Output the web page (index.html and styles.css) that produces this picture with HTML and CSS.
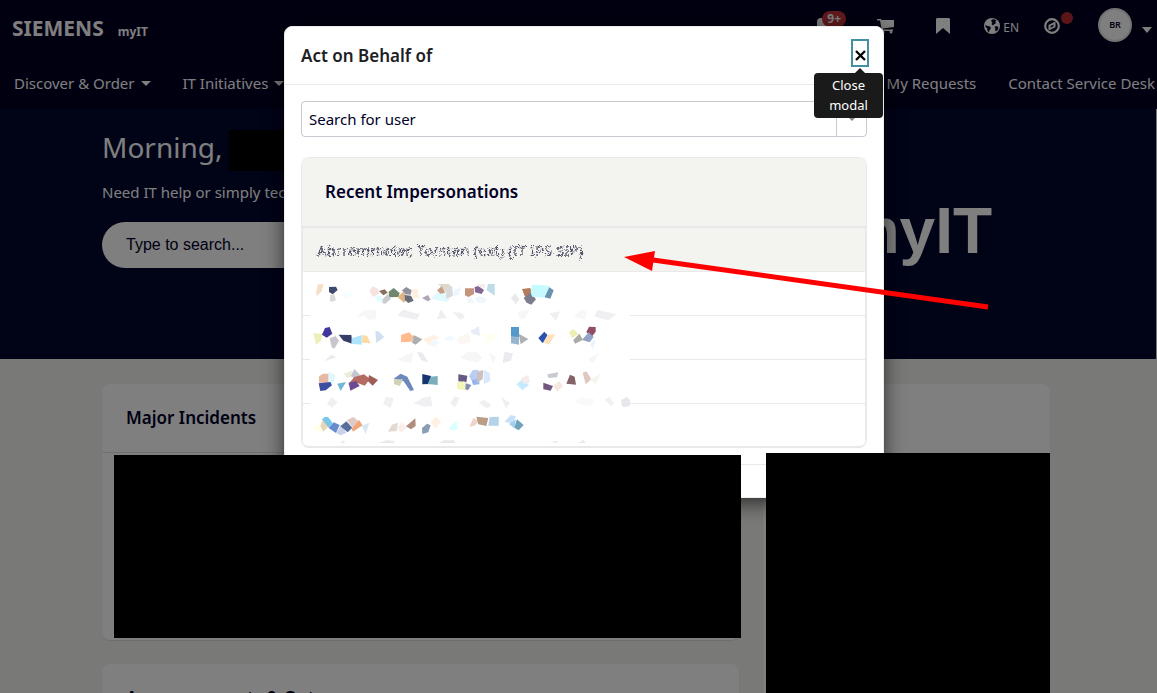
FILE: index.html
```html
<!DOCTYPE html>
<html lang="en">
<head>
<meta charset="utf-8">
<title>myIT</title>
<link rel="stylesheet" href="styles.css">
</head>
<body>
<header class="site-header">
  <div class="top-row">
    <a class="brand" href="#"><span class="brand-name">SIEMENS</span><span class="brand-product">myIT</span></a>
    <div class="tools">
      <button class="tool bell" aria-label="Notifications"><svg width="16" height="18" viewBox="0 0 16 18"><path fill="currentColor" d="M8 1a6 6 0 0 1 6 6v5l2 2H0V5a4 4 0 0 1 4-4zM6 15h4a2 2 0 0 1-4 0z"/></svg><span class="count">9+</span></button>
      <button class="tool cart" aria-label="Cart"><svg width="17" height="16" viewBox="0 0 17 16"><path fill="currentColor" d="M0 1h4l.5 1H17v7L6 10.500v1h10v1.500H5L3 2.500H0z"/><circle cx="6" cy="14" r="1.500" fill="currentColor"/><circle cx="14" cy="14" r="1.500" fill="currentColor"/></svg></button>
      <button class="tool bookmark" aria-label="Bookmarks"><svg width="14" height="16" viewBox="0 0 14 16"><path fill="currentColor" d="M1 0h12l1 1v15l-7-6-7 6V1z"/></svg></button>
      <button class="tool language"><svg width="16" height="16" viewBox="0 0 16 16"><circle cx="8" cy="8" r="8" fill="currentColor"/><path fill="#000028" d="M8 1.500l2.500-.3 2 1.300-1.500 1.500L12.500 5l-2 1L9 7.500 7.500 6 8.500 4.500 7 3zM1.300 7l2.200 1 2.500.5 1 1.500-1.500 2.200L5 14.300 3.500 13l-.3-2.500-1.700-1.500zM11 8.500l2-.5 1.500 1.500-.5 2-2 2-1-1.500.5-1.500-1-1z"/></svg><span>EN</span></button>
      <button class="tool compass" aria-label="Guided tour"><svg width="16" height="16" viewBox="0 0 16 16"><circle cx="8" cy="8" r="6.800" fill="none" stroke="currentColor" stroke-width="2.200"/><path fill="currentColor" fill-rule="evenodd" d="M11.500 3.500v5.500l-7 3.500V7zM9.500 6.500L6.500 8v1.800l3-1.500z"/></svg><span class="dot"></span></button>
      <button class="profile" aria-label="Profile"><span class="avatar">BR</span><span class="caret"></span></button>
    </div>
  </div>
  <nav class="main-nav">
    <a href="#">Discover &amp; Order<span class="caret"></span></a>
    <a href="#">IT Initiatives<span class="caret"></span></a>
    <a class="push" href="#">My Requests</a>
    <a href="#">Contact Service Desk</a>
  </nav>
</header>
<section class="hero">
  <div class="hero-copy">
    <h1>Morning,</h1>
    <p>Need IT help or simply tech advice?</p>
    <input class="hero-search" type="text" placeholder="Type to search..." aria-label="Type to search">
  </div>
  <div class="hero-logo">myIT</div>
</section>
<main class="content">
  <div class="column">
    <section class="card incidents"><h2>Major Incidents</h2></section>
    <section class="card"><h2>Announcements &amp; Outages</h2></section>
  </div>
  <aside class="card side"></aside>
</main>
<div class="backdrop">
  <div class="modal" role="dialog" aria-labelledby="modal-title">
    <div class="modal-head">
      <h2 id="modal-title">Act on Behalf of</h2>
      <button class="close" aria-label="Close modal"><svg width="11" height="11" viewBox="0 0 11 11"><path d="M1 1l9 9M10 1l-9 9" stroke="#000" stroke-width="2.300"/></svg></button>
      <div class="tooltip" role="tooltip">Close modal</div>
    </div>
    <div class="modal-body">
      <div class="combo">
        <input type="text" placeholder="Search for user" aria-label="Search for user">
        <button aria-label="Open list"><span class="small-caret"></span></button>
      </div>
      <section class="recent">
        <h3>Recent Impersonations</h3>
        <ul>
          <li class="active"><span class="scrambled">Abrremmelar, Torsten (ext) (IT IPS SIP)</span></li>
          <li></li><li></li><li></li><li></li>
        </ul>
      </section>
    </div>
    <div class="modal-foot"></div>
  </div>
</div>
<svg class="markup" width="1157" height="693" viewBox="0 0 1157 693" aria-hidden="true">
  <defs><filter id="scramble" x="-2%" y="-20%" width="104%" height="140%"><feTurbulence type="fractalNoise" baseFrequency="0.7" numOctaves="2" seed="4" result="n"/><feDisplacementMap in="SourceGraphic" in2="n" scale="6" xChannelSelector="R" yChannelSelector="G"/></filter></defs>
  <path fill="#fff" d="M310 282h320v162H310z"/>
  <g transform="translate(300 220) scale(.333333)">
    <path fill="#f6dfc8" d="M54 193l17-1-6 22-14 14-3-11z"/><path fill="#3e4970" d="M87 201l21-1 5 10-15 13-11-7z"/><path fill="#dadada" d="M91 224l12-1 5 18-13 5-6-5z"/><path fill="#f5fdff" d="M127 223l15-10 18 1-4 15-24 7z"/>
    <path fill="#f5e3df" d="M208 212l9-13 17 7 3 15-18 10z"/><path fill="#87705f" d="M237 213l17-5 9 10-13 8z"/><path fill="#71866e" d="M266 215l15-11 18 15-4 12-28 1z"/><path fill="#cbcbce" d="M245 241l18-19 10 14-17 15-10-2z"/><path fill="#e3fcff" d="M225 230l19-5 5 22-16-1z"/><path fill="#8f929e" d="M306 211l13-10 16 10-3 13-16-1z"/><path fill="#dfb681" d="M293 231l18-17 10 22-9 12z"/><path fill="#686c79" d="M314 225l19 2 8 15-16 7-10-8z"/><path fill="#ffefdf" d="M336 208l17-1 5 27-20 1z"/>
    <path fill="#b0a6b6" d="M366 234l18-9 8 14-9 5z"/><path fill="#e0faff" d="M392 237l20-21 26 4 11 17-9 9z"/><path fill="#e0d9cb" d="M414 192h34l8 20-18 4z"/><path fill="#c59f86" d="M411 211l14-12 11 19-15 3z"/><path fill="#d7dad8" d="M438 208l18-11 3 31-20 8z"/><path fill="#edf6ff" d="M461 213l25-14-10 26-15 4z"/><path fill="#c6937c" d="M495 205h27v17l-17 9-10-5z"/><path fill="#826594" d="M524 201l11-3 17 12-7 12-20-5z"/><path fill="#f4ecef" d="M528 192h28v12l-18-3z"/><path fill="#bddbe8" d="M564 192h20v35l-24-17z"/><path fill="#f0f7fc" d="M500 235l15-4 8 19-19-1zM525 233l15-5 22 9-11 14-21-4z"/>
    <path fill="#e8e9e9" d="M633 235l12-15 14 18-12 14z"/><path fill="#b57c5a" d="M666 207l24-3 8 14-23 13z"/><path fill="#7b7d8c" d="M671 234l20-16 17 20-14 16-14-6z"/><path fill="#c5faff" d="M696 195h26l28 4-11 34-43-3-4-15z"/><path fill="#6a94ae" d="M748 202l13 9-10 25-17-4z"/>
    <path fill="#f7f7f8" d="M166 291l27-22h34l3 27-23 5-11-12zM655 274l34-5-16 29-16-3zM822 290l21-22 18 7-7 23z"/><path fill="#efeff1" d="M293 288l15-19 52 14-10 16zM411 298l12-30 17 25zM458 276l29 3 8 14-15 6zM749 280l32-6-14 28zM883 288l10-18 56 13-24 18-25-6z"/>
  </g>
  <g transform="translate(300 320) scale(.333333)">
    <path fill="#eff0b9" d="M40 39l27 3-3 19-16 14z"/><path fill="#44379b" d="M66 44l9-20 14-3 8 20-17 12z"/><path fill="#c9c4cd" d="M89 55l18-7 10 14-14 24-8-4z"/><path fill="#363d66" d="M116 44l38 1 3 26-27-9z"/><path fill="#ade4fb" d="M155 55l30-10v29l-31-3z"/><path fill="#ffd9a3" d="M187 45l14 2 11 23-26-2z"/><path fill="#cfe0f2" d="M226 33l9 1 18 17-24 18z"/><path fill="#ffbb8d" d="M303 45l24-8 14 13-7 15-31 2z"/><path fill="#adaeb0" d="M341 45l26 13-20 16-11-6z"/><path fill="#fff2e3" d="M370 57l31-13 16 9-32 22z"/><path fill="#f1f9ff" d="M385 75l20-20 13 15-14 11zM433 56l17-10 19 12-24 6z"/><path fill="#fcf6f5" d="M469 55l36-17 8 28-33 8z"/><path fill="#e8ebf8" d="M510 33l27-14 3 28-23-5z"/><path fill="#fffff0" d="M553 40l38 4-13 22-18 3z"/>
    <path fill="#5399cb" d="M633 21h24v30l-24-1z"/><path fill="#94b6ce" d="M633 50l24 2v22l-24-4z"/><path fill="#aeb1b6" d="M656 41l29 16-23 16z"/><path fill="#2b51ae" d="M715 54l18-19 10 11-15 24z"/><path fill="#ffe0bb" d="M743 44l23-1-20 31-15-7z"/><path fill="#efefb5" d="M807 36l14-9 14 15-19 13z"/><path fill="#ababa6" d="M820 60l18-19 11 18-24 12z"/><path fill="#924e68" d="M859 36l8-16 20 1v14l-13 17z"/><path fill="#92a3c5" d="M846 60l20-23 15 14-12 16z"/><path fill="#e9f6ff" d="M870 73l12-15 5 9-9 21z"/>
    <path fill="#ebebef" d="M72 124l22-20 15 8zM350 95l17 3 18 29-21-6zM608 129l5-33 26 4-6 22z"/><path fill="#f6f6f7" d="M291 120l26-15 22-8-4 32-19-3zM482 115l18-18 32-1 14 17-14 15zM568 97l20 15-11 20zM865 117l32-18-19 32z"/>
    <path fill="#e8b9a2" d="M57 169l12-8h17v27H57z"/><path fill="#dff8ff" d="M86 155l20 10-6 27-15-4z"/><path fill="#3b4ea1" d="M56 190l35-4 5 10-19 15-16 2z"/><path fill="#72b6d1" d="M112 191l26-5-16 27z"/><path fill="#edebdc" d="M131 161l25-9 7 18-23 3z"/><path fill="#c4c5ce" d="M153 168l10-21 17 17-12 16z"/><path fill="#b56b62" d="M147 190l16-19 29-8 18 14-16 20-21-8-27 7z"/><path fill="#9e5e57" d="M207 165l27 15-16 17-14-13z"/><path fill="#6d4b93" d="M146 188l22-5 11 15-28 14z"/>
    <path fill="#6d89bb" d="M281 176l21-15 20 9 20 40-11 3-20-29z"/><path fill="#d0d1b7" d="M282 178h27l-10 20-17-6z"/><path fill="#15356e" d="M367 162l26 6-3 24-23 1z"/><path fill="#7badbc" d="M392 170l21-2v27l-30-3z"/><path fill="#645a84" d="M475 163l27 4-3 20-24-3z"/><path fill="#f4f5b8" d="M471 187l23-3 3 26-25-3z"/><path fill="#858eae" d="M497 190l17 5-10 16-8-3z"/><path fill="#b9cef4" d="M507 169l11-18 17-2-2 31-15 7z"/><path fill="#93b4ee" d="M515 180l23-4v17l-19 2z"/><path fill="#cec0c1" d="M532 155l18-5-2 27-18 13z"/><path fill="#d8e9fb" d="M551 150l18 8 2 25-20 9z"/><path fill="#c5eafe" d="M649 193l19-15 19 17-20 15z"/><path fill="#f4eceb" d="M661 177l24-13 5 23-17 5z"/>
    <path fill="#c8cacf" d="M742 163l33-6-4 15-26 2z"/><path fill="#725880" d="M730 188l29 10-7 14-22-4z"/><path fill="#f6e8df" d="M759 198l19-15 11 16-17 16z"/><path fill="#846268" d="M799 191l11-27 14 6 4 24z"/><path fill="#dfc6c0" d="M848 158l11-4 15 24-17 15z"/><path fill="#f5f5ec" d="M870 178l32-15-15 30z"/>
    <path fill="#f0f0f2" d="M81 253l13-21 19 15-16 16zM249 251l9-21 23 5-9 29zM340 250l28-16 24-5 5 29-23 2zM450 250l13-21 17 4-15 29zM603 231l27 17-12 18zM536 248l16-9 22 15-12 12zM914 240l14-9 14 18-8 9z"/><path fill="#e6e6ec" d="M964 240l16-9 10 9v18l-21 4-5-11z"/><path fill="#f9f9fa" d="M822 245l22-13 40 6-12 22z"/>
    <path fill="#ffffec" d="M38 322l20-14 8 25-23 1z"/><path fill="#ead5b9" d="M61 318l8-20 20 18-19 19z"/><path fill="#78c7eb" d="M66 298l8-7h10l14 18-12 14z"/><path fill="#668cce" d="M86 324l15-17 18 8-11 24z"/><path fill="#c9d2ed" d="M109 339l14-24 16 24-17 7z"/><path fill="#566f9c" d="M121 319l18-15 18 19-14 14z"/><path fill="#e0cac4" d="M140 301l20-10 15 12-16 20z"/><path fill="#f0a67c" d="M155 326l22-26 11 16-29 19z"/><path fill="#d9e7f5" d="M185 317l23-9-11 34z"/><path fill="#e2d9d0" d="M264 335l12-21 18-6-4 25z"/><path fill="#f9eeea" d="M291 325l15-18 15 16-18 15z"/><path fill="#b08d7c" d="M318 319l28-24 1 23-14 10z"/><path fill="#8a9db4" d="M366 324l15-13 11 5-7 21-18 5z"/><path fill="#fff2e5" d="M392 307l15-18 17 16-18 22z"/><path fill="#d9ffff" d="M449 321l20-19 4 27-23 2z"/><path fill="#ecd4c8" d="M508 321l12-27 16 8-10 14z"/><path fill="#b99d85" d="M529 290l36 4-6 24-24-5z"/><path fill="#b4d2e8" d="M569 291l27-1v27h-31z"/><path fill="#c8e0f8" d="M613 305l19-20 15 4-6 23z"/><path fill="#a1cfee" d="M627 312l21-13-5 26z"/><path fill="#70a2b9" d="M643 323l8-25 20 17-15 16z"/><path fill="#e9e9eb" d="M120 369l9-8 8 8zM235 369l24-8 24 2v6zM418 369l13-8h33v8zM750 366l22-3v6zM835 369l14-10 9 10z"/>
  </g>
  <path d="M229 130h55v41h-55zM114 455h627v183H114zM766 453h284v240H766z"/>
  <path d="M653 260L988 307" stroke="red" stroke-width="5"/><path fill="red" d="M624 257l31-6-3 20z"/>
</svg>
</body>
</html>
```
FILE: styles.css
```css
* { box-sizing: border-box; }
body {
  margin: 0;
  height: 100vh;
  background: #f3f3ef;
  color: #000028;
  font: 15px/20px "Noto Sans", sans-serif;
  overflow: hidden;
  display: flex;
  flex-direction: column;
}
h1, h2, h3, p, ul { margin: 0; padding: 0; }
button { border: 0; padding: 0; background: none; color: inherit; font: inherit; }
a { color: inherit; text-decoration: none; }
.site-header { flex: none; background: #000022; color: #fff; height: 109px; }
.top-row { display: flex; justify-content: space-between; height: 56px; padding: 0 5px 0 12px; }
.brand { display: flex; align-items: baseline; gap: 14px; padding-top: 16px; }
.brand-name { font: bold 21px/24px "Noto Sans", sans-serif; }
.brand-product { font: bold 12px/16px "Noto Sans", sans-serif; }
.tools { display: flex; align-items: center; height: 50px; padding-top: 2px; }
.tool { position: relative; display: flex; align-items: center; color: #fff; }
.bell { margin-right: 44px; }
.cart { margin-right: 42px; }
.bookmark { margin-right: 34px; }
.language { gap: 3px; margin-right: 25px; font-size: 12px; }
.language span { padding-top: 4px; }
.compass { margin-right: 38px; }
.count {
  position: absolute; left: 5px; top: -6px;
  width: 24px; height: 16px; border-radius: 8px;
  background: #c2343b; font: bold 12px/16px "Noto Sans", sans-serif;
}
.dot { position: absolute; left: 17px; top: -6px; width: 12px; height: 12px; border-radius: 50%; background: #b82b2f; }
.profile { display: flex; align-items: center; gap: 10px; margin-bottom: 3px; }
.avatar {
  width: 34px; height: 34px; border-radius: 50%;
  border: 2px solid #e4e4e4; background: #fff; color: #000028;
  font: 600 9px/30px "Noto Sans", sans-serif;
}
.caret { border: 5px solid transparent; border-top-color: currentColor; border-bottom: 0; }
.profile .caret { border-width: 6px 5px 0; margin-top: 10px; }
.main-nav { display: flex; gap: 32px; padding: 17px 2px 0 14px; color: #fff; white-space: nowrap; }
.main-nav a { display: flex; align-items: center; gap: 6px; }
.main-nav .push { margin-left: auto; }
.hero {
  flex: none;
  display: flex; justify-content: space-between;
  height: 250px; margin-right: 1px; padding: 20px 164px 0 102px;
  background: #02062f; color: #fff;
}
.hero-copy { width: 420px; }
.hero h1 { font: 400 28px/36px "Noto Sans", sans-serif; }
.hero p { margin-top: 17px; }
.hero-search {
  width: 100%; height: 46px; margin-top: 20px; padding: 0 24px;
  border: 0; border-radius: 23px; background: #fff;
  font: 16px "Liberation Sans", sans-serif;
}
input::placeholder { color: #000028; opacity: 1; }
.hero-logo { padding-top: 64px; font: bold 64px/76px "Liberation Sans", sans-serif; }
.content { flex: 1; min-height: 0; overflow: hidden; display: flex; gap: 24px; padding: 25px 107px 0 102px; }
.column { flex: 1; display: flex; flex-direction: column; gap: 24px; }
.card { flex: none; min-height: 256px; border-radius: 8px; background: #fff; box-shadow: 0 1px 1px #dddddc; }
.card h2 { height: 69px; padding: 21px 24px; border-bottom: 1px solid #e3e3e3; font: 600 17px/25px "Noto Sans", sans-serif; }
.side { width: 287px; min-height: 400px; }
.backdrop {
  position: absolute; inset: 0; display: flex; align-items: flex-start; justify-content: center;
  padding: 26px 0 0 11px; background: rgba(0, 0, 0, .5);
}
.modal { width: 600px; border: 1px solid #ececec; border-radius: 8px; background: #fff; box-shadow: 0 5px 20px rgba(0, 0, 0, .65); }
.modal-head { position: relative; display: flex; justify-content: space-between; height: 58px; padding: 12px 14px 0 16px; border-bottom: 1px solid #e9e9ec; color: #202024; }
.modal-head h2 { padding-top: 4px; font: 600 17px/26px "Noto Sans", sans-serif; }
.close { display: flex; align-items: center; justify-content: center; width: 18px; height: 28px; padding-top: 5px; border: 2px solid #43919e; }
.tooltip {
  position: absolute; right: 0; top: 46px; width: 69px; padding: 2px 12px 3px;
  border-radius: 4px; background: #1a1a1a; color: #fff; text-align: center; font-size: 13px;
}
.tooltip::before { content: ""; position: absolute; right: 18px; top: -5px; border: 5px solid transparent; border-top: 0; border-bottom-color: #1a1a1a; }
.modal-body { padding: 16px; }
.combo { display: flex; height: 36px; border: 1px solid #c9c9d2; border-radius: 4px; }
.combo input { flex: 1; min-width: 0; border: 0; padding: 0 7px; background: none; font: 15px "Noto Sans", sans-serif; }
.combo button { display: flex; align-items: center; justify-content: center; width: 30px; border-left: 1px solid #c9c9d2; }
.small-caret { border: 4px solid transparent; border-top-color: #888; border-bottom: 0; }
.recent { margin-top: 20px; border: 1px solid #e9e9ea; border-bottom-width: 2px; border-radius: 8px; overflow: hidden; }
.recent h3 { height: 70px; padding: 21px 23px; border-bottom: 2px solid #e9e9ea; background: #f3f3ef; color: #000028; font: 600 17px/26px "Noto Sans", sans-serif; }
.recent ul { list-style: none; border: solid #e9e9ea; border-width: 0 1px; }
.recent li { height: 44px; padding: 12px 14px; border-bottom: 1px solid #e9e9ea; }
.recent li:last-child { height: 42px; border-bottom: 0; }
.recent .active { background: #f3f3ef; }
.scrambled { display: inline-block; color: #55556c; white-space: nowrap; filter: url(#scramble); }
.modal-foot { height: 33px; border-top: 1px solid #e9e9ea; }
.markup { position: absolute; left: 0; top: 0; }
```
